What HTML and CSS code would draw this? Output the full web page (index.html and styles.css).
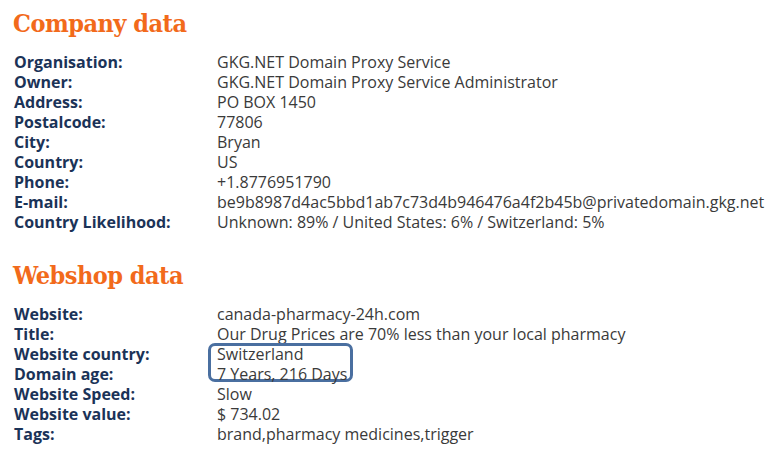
FILE: index.html
```html
<!DOCTYPE html>
<html>
<head>
<meta charset="utf-8">
<link rel="stylesheet" href="styles.css">
</head>
<body>
<section class="section">
  <h2 class="title">Company data</h2>
  <div class="table">
    <div class="label">Organisation:</div><div class="value">GKG.NET Domain Proxy Service</div>
    <div class="label">Owner:</div><div class="value">GKG.NET Domain Proxy Service Administrator</div>
    <div class="label">Address:</div><div class="value">PO BOX 1450</div>
    <div class="label">Postalcode:</div><div class="value">77806</div>
    <div class="label">City:</div><div class="value">Bryan</div>
    <div class="label">Country:</div><div class="value">US</div>
    <div class="label">Phone:</div><div class="value">+1.8776951790</div>
    <div class="label">E-mail:</div><div class="value">be9b8987d4ac5bbd1ab7c73d4b946476a4f2b45b@privatedomain.gkg.net</div>
    <div class="label">Country Likelihood:</div><div class="value">Unknown: 89% / United States: 6% / Switzerland: 5%</div>
  </div>
</section>
<section class="section second">
  <h2 class="title">Webshop data</h2>
  <div class="table">
    <div class="label">Website:</div><div class="value">canada-pharmacy-24h.com</div>
    <div class="label">Title:</div><div class="value">Our Drug Prices are 70% less than your local pharmacy</div>
    <div class="label">Website country:</div><div class="value">Switzerland<span class="mark"></span></div>
    <div class="label">Domain age:</div><div class="value">7 Years, 216 Days</div>
    <div class="label">Website Speed:</div><div class="value">Slow</div>
    <div class="label">Website value:</div><div class="value">$ 734.02</div>
    <div class="label">Tags:</div><div class="value">brand,pharmacy medicines,trigger</div>
  </div>
</section>
</body>
</html>
```
FILE: styles.css
```css
html, body {
  margin: 0;
  padding: 0;
  background: #ffffff;
}
body {
  padding: 7px 0 0 14px;
  font-family: "Open Sans", sans-serif;
  font-size: 16px;
}
.section { margin: 0; }
.second { margin-top: 27px; }
.title {
  margin: 0 0 11px -1px;
  font-family: "DejaVu Serif Condensed", "DejaVu Serif", serif;
  font-weight: bold;
  font-size: 25px;
  line-height: 34px;
  color: #f26a1b;
  letter-spacing: -0.5px;
}
.table {
  display: grid;
  grid-template-columns: 203px auto;
  justify-content: start;
  line-height: 20px;
}
.label {
  font-weight: bold;
  color: #1b3358;
}
.value {
  color: #3a3a3a;
  position: relative;
}
.mark {
  position: absolute;
  left: -9px;
  top: -1px;
  width: 139px;
  height: 33px;
  border: 3px solid #4a6fa0;
  border-radius: 7px;
}
```
